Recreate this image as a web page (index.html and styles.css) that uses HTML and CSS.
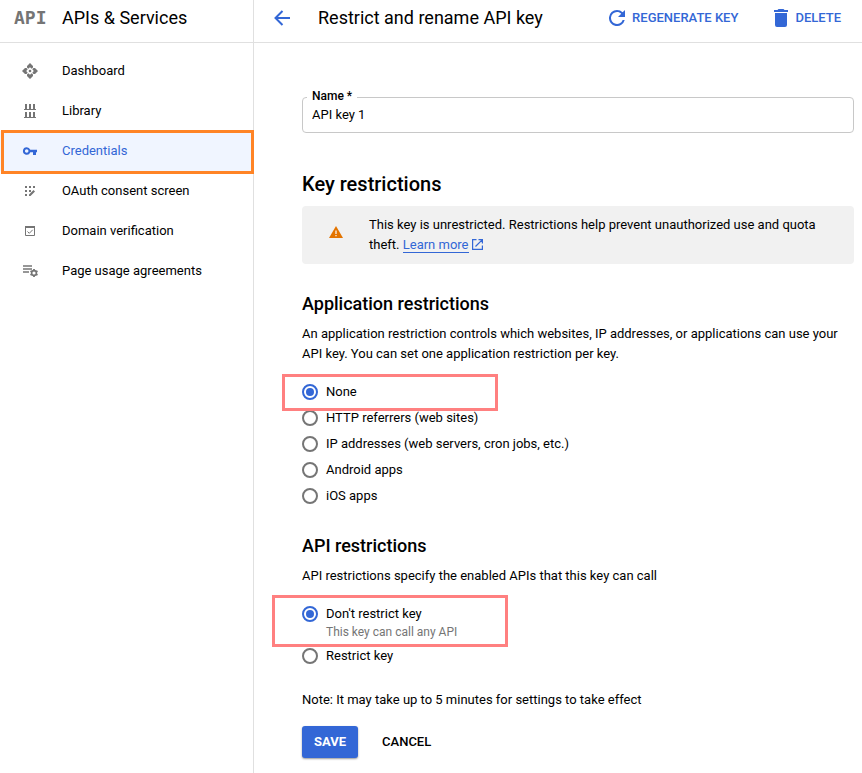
FILE: index.html
```html
<!DOCTYPE html>
<html lang="en">
<head>
<meta charset="utf-8">
<meta name="viewport" content="width=device-width, initial-scale=1">
<title>Restrict and rename API key</title>
<link rel="stylesheet" href="styles.css">
</head>
<body>
<div class="app">
  <aside class="sidebar">
    <div class="bar brand">
      <span class="logo">API</span>
      <span class="title">APIs &amp; Services</span>
    </div>
    <nav class="nav">
      <a class="nav-item" href="#">
        <svg class="nav-icon" viewBox="0 0 16 16" fill="currentColor"><circle cx="8" cy="8" r="1.300"/><path d="M8 0l3 3v1.500L9.700 5.700 8 4.200 6.300 5.700 5 4.500V3zM8 16l3-3v-1.500l-1.300-1.200L8 11.800l-1.700-1.500L5 11.500V13zM0 8l3-3h1.500l1.200 1.300L4.200 8l1.500 1.700L4.500 11H3zM16 8l-3-3h-1.500l-1.200 1.300L11.800 8l-1.500 1.700 1.200 1.300H13z"/></svg>
        Dashboard
      </a>
      <a class="nav-item" href="#">
        <svg class="nav-icon" viewBox="0 0 16 16" fill="currentColor"><path d="M2 6h12v1H2zM3 1h2v5H3zM7 1h2v5H7zM11 1h2v5h-2zM2 14h12v1H2zM3 9h2v5H3zM7 9h2v5H7zM11 9h2v5h-2z"/></svg>
        Library
      </a>
      <a class="nav-item active" href="#" aria-current="page">
        <svg class="nav-icon" viewBox="0 0 16 16" fill="currentColor"><path fill-rule="evenodd" d="M4.700 4.200a3.800 3.800 0 1 0 3.600 5.100H11V12h3V9.300h1V6.700H8.300A3.800 3.800 0 0 0 4.700 4.200zm0 2a1.800 1.800 0 1 1 0 3.600 1.800 1.800 0 0 1 0-3.600z"/></svg>
        Credentials
      </a>
      <a class="nav-item" href="#">
        <svg class="nav-icon" viewBox="0 0 16 16" fill="currentColor"><path d="M3 3h2v2H3zM7 3h2v2H7zM11 3h2v2h-2zM3 7h2v2H3zM7 7h2v2H7zM3 11h2v2H3zM7 11.500 11.500 7 13 8.500 8.500 13H7z"/></svg>
        OAuth consent screen
      </a>
      <a class="nav-item" href="#">
        <svg class="nav-icon" viewBox="0 0 16 16" fill="none" stroke="currentColor"><path d="M3.500 4v8.500h9V4z"/><path d="M3 4h10" stroke-width="2"/><path d="M5.500 8.500 7.300 10.300 10.700 6.800"/></svg>
        Domain verification
      </a>
      <a class="nav-item" href="#">
        <svg class="nav-icon" viewBox="0 0 16 16" fill="none" stroke="currentColor"><path d="M1 3h9M1 6h9M1 9h6" stroke-width="1.500"/><circle cx="12" cy="10" r="2.400" stroke-width="1.600"/><path d="M12 6v1.500M12 12.500V14M8.500 8l1.300.8M14.200 11.200l1.300.8M8.500 12l1.300-.8M14.200 8.800l1.300-.8" stroke-width="1.800"/></svg>
        Page usage agreements
      </a>
    </nav>
  </aside>
  <main class="main">
    <header class="bar toolbar">
      <button class="icon-button" type="button" aria-label="Back">
        <svg class="back-icon" viewBox="0 0 16 16" fill="none" stroke="currentColor" stroke-width="2"><path d="M16 8H2M8.500 1 1.500 8l7 7"/></svg>
      </button>
      <h1 class="title">Restrict and rename API key</h1>
      <div class="actions">
        <button class="action" type="button">
          <svg class="refresh-icon" viewBox="4 4 16 16" fill="currentColor"><path d="M17.650 6.350A7.950 7.950 0 0 0 12 4a8 8 0 1 0 7.730 10h-2.080A6 6 0 1 1 12 6c1.660 0 3.140.69 4.220 1.780L13 11h7V4z"/></svg>
          REGENERATE KEY
        </button>
        <button class="action" type="button">
          <svg class="trash-icon" viewBox="5 3 14 18" fill="currentColor"><path d="M6 19a2 2 0 0 0 2 2h8a2 2 0 0 0 2-2V7H6zM19 4h-3.500l-1-1h-5l-1 1H5v2h14z"/></svg>
          DELETE
        </button>
      </div>
    </header>
    <form class="content">
      <div class="field">
        <label class="field-label" for="key-name">Name *</label>
        <input class="field-input" id="key-name" type="text" value="API key 1">
      </div>

      <h2 class="heading key-heading">Key restrictions</h2>
      <div class="notice">
        <svg class="warning-icon" viewBox="0 0 14 12"><path fill="#e37400" d="M7 0l7 12H0z"/><path fill="#fff" d="M6.400 4.500h1.200v3.500H6.400zM6.400 9h1.200v1.200H6.400z"/></svg>
        <p class="notice-text">This key is unrestricted. Restrictions help prevent unauthorized use and quota theft. <a class="link" href="#">Learn more</a>
          <svg class="external-icon" viewBox="0 0 11 11" fill="none" stroke="#3367d6"><path d="M4.500.6H.6v9.800h9.800V6.500M6.500.6h3.900v3.900M10.400.6 3.500 7.500" stroke-width="1.200"/></svg></p>
      </div>

      <h2 class="heading">Application restrictions</h2>
      <p class="text">An application restriction controls which websites, IP addresses, or applications can use your API key. You can set one application restriction per key.</p>
      <div class="options" role="radiogroup" aria-label="Application restrictions">
        <label class="option marked marked-none"><input class="radio" type="radio" name="app" checked>None</label>
        <label class="option"><input class="radio" type="radio" name="app">HTTP referrers (web sites)</label>
        <label class="option"><input class="radio" type="radio" name="app">IP addresses (web servers, cron jobs, etc.)</label>
        <label class="option"><input class="radio" type="radio" name="app">Android apps</label>
        <label class="option"><input class="radio" type="radio" name="app">iOS apps</label>
      </div>

      <h2 class="heading">API restrictions</h2>
      <p class="text">API restrictions specify the enabled APIs that this key can call</p>
      <div class="options" role="radiogroup" aria-label="API restrictions">
        <label class="option marked marked-open"><input class="radio" type="radio" name="api" checked><span>Don't restrict key<span class="hint">This key can call any API</span></span></label>
        <label class="option"><input class="radio" type="radio" name="api">Restrict key</label>
      </div>

      <p class="note">Note: It may take up to 5 minutes for settings to take effect</p>
      <div class="buttons">
        <button class="button primary" type="submit">SAVE</button>
        <button class="button" type="button">CANCEL</button>
      </div>
    </form>
  </main>
</div>
</body>
</html>
```
FILE: styles.css
```css
*,
*::before,
*::after {
  box-sizing: border-box;
}

body {
  margin: 0;
  background: #fff;
  color: #000;
  font: 13px/20px Roboto, "Liberation Sans", sans-serif;
}

h1, h2, p {
  margin: 0;
}

button {
  padding: 0;
  border: 0;
  background: none;
  font: inherit;
  cursor: pointer;
}

svg {
  flex: none;
}

.app {
  display: flex;
  min-height: 100vh;
}

.sidebar {
  flex: none;
  width: 254px;
  border-right: 1px solid #e0e0e0;
}

.main {
  flex: 1;
  min-width: 0;
}

.bar {
  display: flex;
  align-items: center;
  height: 43px;
  padding-bottom: 6px;
  border-bottom: 1px solid #e0e0e0;
}

.title {
  font-size: 18px;
  font-weight: 400;
  line-height: 24px;
}

.brand {
  gap: 16px;
  padding-left: 14px;
}

.logo {
  width: 32px;
  color: #757575;
  font: bold 18px/24px "DejaVu Sans Mono", monospace;
}

.nav {
  padding-top: 8px;
}

.nav-item {
  position: relative;
  display: flex;
  align-items: center;
  gap: 24px;
  height: 40px;
  padding-left: 22px;
  color: #000;
  text-decoration: none;
}

.nav-icon {
  width: 16px;
  height: 16px;
  color: #757575;
}

.active,
.active .nav-icon {
  color: #3367d6;
}

.active {
  background: #f0f5ff;
}

.active::after {
  content: "";
  position: absolute;
  inset: -1px -1px -3px 1px;
  border: 3px solid #ff8426;
}

.toolbar {
  padding-left: 20px;
  padding-right: 21px;
}

.icon-button {
  display: flex;
  margin-right: 28px;
  color: #3367d6;
}

.back-icon,
.refresh-icon {
  width: 16px;
  height: 16px;
}

.actions {
  display: flex;
  gap: 36px;
  margin-left: auto;
}

.action {
  display: flex;
  align-items: center;
  gap: 7px;
  color: #3367d6;
  font-weight: 500;
}

.trash-icon {
  width: 14px;
  height: 18px;
}

.content {
  padding: 54px 8px 15px 48px;
}

.field {
  position: relative;
}

.field-label {
  position: absolute;
  top: -9px;
  left: 5px;
  padding: 0 5px;
  background: #fff;
  font-size: 12px;
  font-weight: 500;
  line-height: 16px;
}

.field-input {
  display: block;
  width: 100%;
  height: 36px;
  padding: 0 9px 2px;
  border: 1px solid #c8c8c8;
  border-radius: 4px;
  background: #fff;
  color: #000;
  font: inherit;
}

.heading {
  margin-top: 28px;
  font-size: 18px;
  font-weight: 500;
  line-height: 24px;
}

.key-heading {
  margin-top: 39px;
  font-size: 20px;
}

.notice {
  display: flex;
  align-items: flex-start;
  gap: 26px;
  margin-top: 10px;
  padding: 9px 24px 9px 27px;
  border-radius: 4px;
  background: #f1f1f1;
}

.warning-icon {
  width: 14px;
  height: 12px;
  margin-top: 11px;
}

.link {
  border-bottom: 1px solid #3367d6;
  color: #3367d6;
  text-decoration: none;
}

.external-icon {
  width: 11px;
  height: 11px;
  vertical-align: -1px;
}

.text {
  margin-top: 8px;
}

.options {
  display: flex;
  flex-direction: column;
  margin: 15px 0 21px;
}

.options + .heading {
  margin-top: 25px;
}

.option {
  position: relative;
  display: flex;
  align-items: flex-start;
  gap: 8px;
  padding: 4px 0;
  line-height: 18px;
}

.radio {
  display: grid;
  place-items: center;
  flex: none;
  width: 16px;
  height: 16px;
  margin: 1px 0;
  border: 2px solid #757575;
  border-radius: 50%;
  appearance: none;
}

.radio:checked {
  border-color: #3367d6;
}

.radio:checked::before {
  content: "";
  width: 8px;
  height: 8px;
  border-radius: 50%;
  background: #3367d6;
}

.hint {
  display: block;
  color: #757575;
  font-size: 12px;
  line-height: 18px;
}

.marked::after {
  content: "";
  position: absolute;
  z-index: 1;
  border: 3px solid #ff8080;
}

.marked-none::after {
  top: -5px;
  left: -20px;
  width: 216px;
  height: 37px;
}

.marked-open {
  padding-bottom: 2px;
}

.marked-open::after {
  top: -6px;
  left: -30px;
  width: 236px;
  height: 52px;
}

.buttons {
  display: flex;
  gap: 12px;
  margin-top: 16px;
}

.button {
  height: 32px;
  padding: 0 12px;
  border-radius: 3px;
  color: #000;
  font-weight: 500;
}

.primary {
  background: #3367d6;
  box-shadow: 0 1px 2px rgba(0, 0, 0, 0.4);
  color: #fff;
  font-weight: 700;
}
```
